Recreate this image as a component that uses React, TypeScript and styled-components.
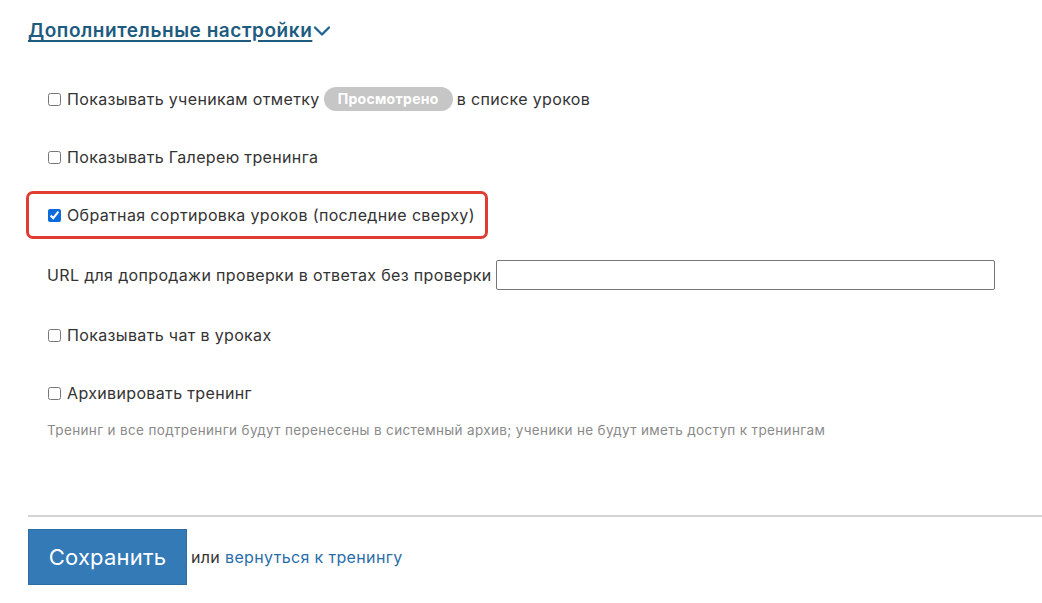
import React, { useState } from 'react';
import styled, { createGlobalStyle } from 'styled-components';

const GlobalStyle = createGlobalStyle`
  html, body {
    margin: 0;
    padding: 0;
    background: #ffffff;
  }
  body {
    font-family: Inter, "Noto Sans", "Liberation Sans", sans-serif;
    color: #333333;
  }
`;

const Page = styled.div`
  padding: 19px 0 0 28px;
`;

const Heading = styled.a`
  display: inline-flex;
  align-items: center;
  font-size: 19px;
  line-height: 24px;
  font-weight: 600;
  letter-spacing: 0.55px;
  color: #1e5b7f;
  text-decoration: underline;
  text-underline-offset: 3px;
  text-decoration-thickness: 2px;
  cursor: pointer;

  svg {
    margin-left: 1px;
  }
`;

const Settings = styled.div`
  display: flex;
  flex-direction: column;
  margin-top: 27px;
`;

const Row = styled.label<{ $highlight?: boolean }>`
  display: flex;
  align-items: center;
  width: max-content;
  height: 58px;
  box-sizing: border-box;
  padding-left: 20px;
  font-size: 16px;
  line-height: 24px;
  letter-spacing: 0.35px;
  color: #333333;

  ${({ $highlight }) =>
    $highlight &&
    `
    height: 48px;
    margin: 5px 0 5px -2px;
    padding: 0 10px 0 19px;
    border: 3px solid #e03c31;
    border-radius: 7px;
  `}
`;

const Checkbox = styled.input.attrs({ type: 'checkbox' })`
  width: 13px;
  height: 13px;
  margin: 0 6px 0 0;
  accent-color: #0b6bdc;
`;

const Badge = styled.span`
  display: inline-block;
  margin: 0 4px;
  padding: 0 14px;
  height: 24px;
  line-height: 24px;
  border-radius: 12px;
  background: #c6c6c6;
  color: #ffffff;
  font-size: 14px;
  font-weight: 700;
  letter-spacing: 0.3px;
`;

const FieldRow = styled.div`
  display: flex;
  align-items: center;
  height: 62px;
  padding-left: 19px;
  font-size: 16px;
  letter-spacing: 0.35px;
`;

const TextInput = styled.input`
  width: 499px;
  height: 30px;
  box-sizing: border-box;
  margin-left: 4px;
  border: 1px solid #767676;
  border-radius: 2px;
  padding: 0 6px;
  font: inherit;
`;

const ArchiveGroup = styled.div`
  display: flex;
  flex-direction: column;
`;

const Hint = styled.div`
  padding-left: 19px;
  margin-top: -1px;
  font-size: 13.5px;
  line-height: 18px;
  letter-spacing: 0.35px;
  color: #8a8a8a;
`;

const Footer = styled.div`
  margin-top: 76px;
  border-top: 2px solid #d4d4d4;
  padding-top: 12px;
  display: flex;
  align-items: center;
  gap: 4px;
  font-size: 16px;
  letter-spacing: 0.35px;
`;

const SaveButton = styled.button`
  width: 159px;
  height: 56px;
  border: 1px solid #2e6da4;
  background: #337ab7;
  color: #ffffff;
  font-family: inherit;
  font-size: 22px;
  letter-spacing: 0.2px;
  cursor: pointer;
`;

const BackLink = styled.a`
  color: #2a6ea9;
  text-decoration: none;
  cursor: pointer;
`;

const Chevron = () => (
  <svg width="18" height="12" viewBox="0 0 18 12" fill="none">
    <path d="M2 2.5 L9 9.5 L16 2.5" stroke="#1f6390" strokeWidth="2.3" strokeLinecap="round" strokeLinejoin="round" />
  </svg>
);

const App = () => {
  const [flags, setFlags] = useState({
    viewed: false,
    gallery: false,
    reverse: true,
    chat: false,
    archive: false,
  });

  const toggle = (key: keyof typeof flags) => {
    setFlags({ ...flags, [key]: !flags[key] });
  };

  return (
    <>
      <GlobalStyle />
      <Page>
        <Heading>
          Дополнительные настройки
          <Chevron />
        </Heading>

        <Settings>
          <Row>
            <Checkbox checked={flags.viewed} onChange={() => toggle('viewed')} />
            Показывать ученикам отметку <Badge>Просмотрено</Badge> в списке уроков
          </Row>
          <Row>
            <Checkbox checked={flags.gallery} onChange={() => toggle('gallery')} />
            Показывать Галерею тренинга
          </Row>
          <Row $highlight>
            <Checkbox checked={flags.reverse} onChange={() => toggle('reverse')} />
            Обратная сортировка уроков (последние сверху)
          </Row>
          <FieldRow>
            URL для допродажи проверки в ответах без проверки
            <TextInput type="text" />
          </FieldRow>
          <Row>
            <Checkbox checked={flags.chat} onChange={() => toggle('chat')} />
            Показывать чат в уроках
          </Row>
          <ArchiveGroup>
            <Row>
              <Checkbox checked={flags.archive} onChange={() => toggle('archive')} />
              Архивировать тренинг
            </Row>
            <Hint>
              Тренинг и все подтренинги будут перенесены в системный архив; ученики не будут иметь доступ к тренингам
            </Hint>
          </ArchiveGroup>
        </Settings>

        <Footer>
          <SaveButton>Сохранить</SaveButton>
          <span>
            или <BackLink>вернуться к тренингу</BackLink>
          </span>
        </Footer>
      </Page>
    </>
  );
};

export default App;
